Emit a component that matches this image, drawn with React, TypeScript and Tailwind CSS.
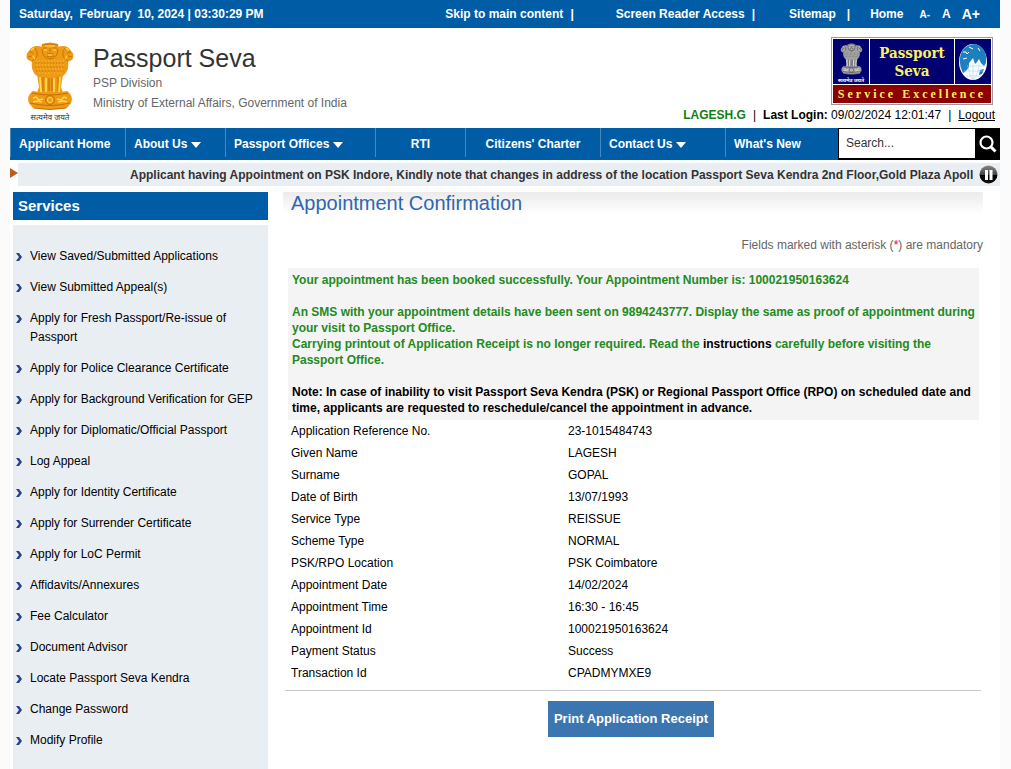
import type { ReactNode } from "react";

const navItems = [
  { label: "Applicant Home", width: "w-[115px]", align: "justify-start" },
  { label: "About Us", width: "w-[100px]", align: "justify-start", menu: true },
  { label: "Passport Offices", width: "w-[150px]", align: "justify-start", menu: true },
  { label: "RTI", width: "w-[90px]", align: "justify-center" },
  { label: "Citizens' Charter", width: "w-[135px]", align: "justify-center" },
  { label: "Contact Us", width: "w-[125px]", align: "justify-start", menu: true },
  { label: "What's New", width: "w-[113px]", align: "justify-start" },
];

const services = [
  "View Saved/Submitted Applications",
  "View Submitted Appeal(s)",
  "Apply for Fresh Passport/Re-issue of Passport",
  "Apply for Police Clearance Certificate",
  "Apply for Background Verification for GEP",
  "Apply for Diplomatic/Official Passport",
  "Log Appeal",
  "Apply for Identity Certificate",
  "Apply for Surrender Certificate",
  "Apply for LoC Permit",
  "Affidavits/Annexures",
  "Fee Calculator",
  "Document Advisor",
  "Locate Passport Seva Kendra",
  "Change Password",
  "Modify Profile",
];

const details = [
  ["Application Reference No.", "23-1015484743"],
  ["Given Name", "LAGESH"],
  ["Surname", "GOPAL"],
  ["Date of Birth", "13/07/1993"],
  ["Service Type", "REISSUE"],
  ["Scheme Type", "NORMAL"],
  ["PSK/RPO Location", "PSK Coimbatore"],
  ["Appointment Date", "14/02/2024"],
  ["Appointment Time", "16:30 - 16:45"],
  ["Appointment Id", "100021950163624"],
  ["Payment Status", "Success"],
  ["Transaction Id", "CPADMYMXE9"],
];

type EmblemProps = {
  className: string;
  base: string;
  light: string;
  dark: string;
};

function Emblem({ className, base, light, dark }: EmblemProps) {
  return (
    <svg viewBox="0 0 50 68" className={className} aria-hidden="true">
      {/* side lions */}
      <path d="M17 5 C12 3 6 4 4 9 C1 11 1 16 3 18 C5 19 6 19 7 20 C6 26 8 31 12 34 L19 34 Z" fill={base} />
      <path d="M33 5 C38 3 44 4 46 9 C49 11 49 16 47 18 C45 19 44 19 43 20 C44 26 42 31 38 34 L31 34 Z" fill={base} />
      <path d="M4 10 q3 -1 4 2 M3 15 l4 -1 M10 6 q3 3 2 8 M7 19 q4 -2 5 -5" fill="none" stroke={dark} strokeWidth="0.9" />
      <path d="M46 10 q-3 -1 -4 2 M47 15 l-4 -1 M40 6 q-3 3 -2 8 M43 19 q-4 -2 -5 -5" fill="none" stroke={dark} strokeWidth="0.9" />
      <path d="M6 8 l3 -2 M8 14 l2 3 M44 8 l-3 -2 M42 14 l-2 3" stroke={light} strokeWidth="1.2" />
      {/* front lion with mane */}
      <path d="M17 2 Q25 -1 33 2 L35 12 Q42 19 39 30 L32 36 L18 36 L11 30 Q8 19 15 12 Z" fill={base} />
      <path d="M17 3 Q25 1 33 3 M18 6 l4 0 M28 6 l4 0 M25 6 l0 4 M22 11 q3 2 6 0 M17 7 q0 9 8 10 q8 -1 8 -10 M21 14 q4 2 8 0" fill="none" stroke={dark} strokeWidth="0.9" />
      <path d="M19 8 l3 0 M28 8 l3 0 M23 13 l4 0 M20 4 l10 0" stroke={light} strokeWidth="1.1" />
      {/* mane curls */}
      <path d="M10 21 H40 M10 25 H40 M11 29 H39 M14 33 H36" stroke={dark} strokeWidth="1" strokeDasharray="1.5 1.5" opacity="0.7" />
      <path d="M11 19 H39 M11 23 H39 M12 27 H38 M14 31 H37" stroke={light} strokeWidth="0.9" strokeDasharray="1.2 1.8" opacity="0.7" />
      {/* legs */}
      <path d="M12 32 H38 L36 45 L38 51 H12 L14 45 Z" fill={base} />
      <path d="M18 35 V49 M24 36 V49 M27 36 V49 M33 35 V49" stroke={dark} strokeWidth="1.1" />
      <path d="M15 35 L16 50 M21 36 V50 M29 36 V50 M35 35 L34 50" stroke={light} strokeWidth="1.8" />
      {/* abacus */}
      <path d="M8 49 Q25 53 42 49 Q49 54 46 61 L42 66 Q25 69 8 66 L4 61 Q1 54 8 49 Z" fill={base} />
      <path d="M7 51 Q25 55 43 51 M5 61 Q25 66 45 61 M9 66 Q25 69 41 66" fill="none" stroke={dark} strokeWidth="1" />
      <circle cx="25" cy="58" r="4.5" fill={base} stroke={dark} strokeWidth="1" />
      <circle cx="25" cy="58" r="2.5" fill="none" stroke={light} strokeWidth="1" />
      <path d="M8 56 l3 -1 3 3 4 -1 M8 60 l4 -1 5 1 M42 56 l-3 -1 -3 3 -4 -1 M42 60 l-4 -1 -5 1" fill="none" stroke={light} strokeWidth="1.4" />
    </svg>
  );
}

function Globe() {
  return (
    <svg viewBox="0 0 30 38" className="h-[38px] w-[30px]" aria-hidden="true">
      <ellipse cx="15" cy="19" rx="14" ry="18" fill="#ffffff" />
      <path d="M4 8 Q9 1 17 1 Q26 3 28 13 L28 20 L26 23 L23 20 L21 16 L19 19 L17 21 L15 15 L11 20 L11 24 L8 28 L5 30 Q-1 19 4 8 Z" fill="#1c7fc0" />
      <path d="M5 9 l3 0 l1 2 l2 -2 M11 4 l4 2 M5 16 l4 -1 M20 5 l2 3" fill="none" stroke="#ffffff" strokeWidth="1" />
      <path d="M22 27 l4 -1 l-2 5 l-3 1 Z" fill="#1c7fc0" />
      <path d="M15 20 V37 M9 23 H28 M6 28 H26 M8 33 H23 M10 24 Q11 32 15 37 M21 21 Q21 31 15 37" fill="none" stroke="#a9d2ec" strokeWidth="0.6" />
    </svg>
  );
}

function PassportSevaLogo() {
  return (
    <div className="flex h-[68px] w-[162px] flex-col gap-px border border-[#98989f] bg-white p-px font-['Liberation_Serif',serif] font-bold text-[#fbf25c]">
      <div className="flex flex-1 gap-px">
        <div className="flex w-[36px] flex-col items-center justify-center bg-[#000070]">
          <Emblem className="h-[36px] w-[23px]" base="#a0a0a0" light="#e6e6e6" dark="#333333" />
          <span className="font-['Noto_Sans',sans-serif] text-[5px] leading-[6px] text-white">सत्यमेव जयते</span>
        </div>
        <div className="flex flex-1 flex-col items-center justify-center bg-[#000070] font-['DejaVu_Serif_Condensed','DejaVu_Serif',serif] text-[15px] leading-[18px]">
          <span>Passport</span>
          <span>Seva</span>
        </div>
        <div className="flex w-[36px] items-center justify-center bg-[#000070]">
          <Globe />
        </div>
      </div>
      <div className="flex h-[18px] items-center justify-center bg-[#8c0000] text-[12px] leading-[18px] tracking-[3px]">
        Service Excellence
      </div>
    </div>
  );
}

function TopLink({ children, className }: { children: ReactNode; className?: string }) {
  return (
    <a href="#" className={className}>
      {children}
    </a>
  );
}

function TopBar() {
  return (
    <div className="flex h-7 items-center bg-[#005da5] pr-5 pl-[9px] text-[12px] font-bold text-white">
      <span className="whitespace-pre">Saturday,  February  10, 2024 | 03:30:29 PM</span>
      <div className="ml-auto flex items-center">
        <TopLink>Skip to main content</TopLink>
        <span className="ml-[7px]">|</span>
        <TopLink className="ml-[42px]">Screen Reader Access</TopLink>
        <span className="ml-[7px]">|</span>
        <TopLink className="ml-[34px]">Sitemap</TopLink>
        <span className="ml-[11px]">|</span>
        <TopLink className="ml-5">Home</TopLink>
        <button type="button" className="ml-4 text-[10px]">A-</button>
        <button type="button" className="ml-3 text-[12px]">A</button>
        <button type="button" className="ml-[11px] text-[14px]">A+</button>
      </div>
    </div>
  );
}

function Header() {
  return (
    <header className="flex h-[100px] justify-between pl-[15px]">
      <div className="flex gap-[18px]">
        <div className="flex flex-col items-center pt-3.5">
          <Emblem className="h-[68px] w-[50px]" base="#ee9a14" light="#ffd94f" dark="#c76f08" />
          <span className="font-['Noto_Sans',sans-serif] text-[8px] leading-[14px] text-[#333333]">सत्यमेव जयते</span>
        </div>
        <div className="pt-[15px] text-[12px] leading-5 text-[#666666]">
          <h1 className="text-[25px] leading-[30px] text-[#333333]">Passport Seva</h1>
          <p>PSP Division</p>
          <p>Ministry of External Affairs, Government of India</p>
        </div>
      </div>
      <div className="flex flex-col items-end pt-[9px] pr-[5px]">
        <div className="pr-0.5">
          <PassportSevaLogo />
        </div>
        <div className="flex gap-[7px] text-[12px] leading-5 text-black">
          <span className="font-bold text-[#118011]">LAGESH.G</span>
          <span>|</span>
          <span>
            <b>Last Login:</b> 09/02/2024 12:01:47
          </span>
          <span>|</span>
          <a href="#" className="underline">Logout</a>
        </div>
      </div>
    </header>
  );
}

function NavBar() {
  return (
    <nav className="flex h-8 bg-[#005da5] text-[12px] font-bold text-white">
      {navItems.map((item) => (
        <a
          key={item.label}
          href="#"
          className={`flex h-[29px] items-center border-l border-[#4687bd] px-2 pt-[3px] whitespace-nowrap ${item.width} ${item.align}`}
        >
          {item.label}
          {item.menu && (
            <svg viewBox="0 0 10 6" className="mt-0.5 ml-1 h-1.5 w-2.5" aria-hidden="true">
              <path d="M0 0 H10 L5 6 Z" fill="#ffffff" />
            </svg>
          )}
        </a>
      ))}
      <form className="flex flex-1 bg-black" onSubmit={(e) => e.preventDefault()}>
        <input
          type="text"
          aria-label="Search"
          placeholder="Search..."
          className="h-[31px] w-full min-w-0 flex-1 border border-black bg-white px-[7px] pb-0.5 text-[12px] font-normal text-black placeholder:text-[#333333]"
        />
        <button type="submit" aria-label="Search" className="flex w-6 items-center justify-center">
          <svg viewBox="0 0 18 18" className="h-[18px] w-[18px]" fill="none" stroke="#ffffff" aria-hidden="true">
            <circle cx="7.5" cy="7.5" r="6" strokeWidth="2.2" />
            <path d="M12 12 L16.5 16.5" strokeWidth="3" />
          </svg>
        </button>
      </form>
    </nav>
  );
}

function Ticker() {
  return (
    <div className="mt-[3px] flex h-[23px] items-center">
      <svg viewBox="0 0 8 10" className="mb-1 h-2.5 w-2 shrink-0" aria-hidden="true">
        <path d="M0 0 L8 5 L0 10 Z" fill="#bf5b21" />
      </svg>
      <div className="flex h-full min-w-0 flex-1 items-center bg-[#e9eef2] pr-0.5 pl-28 text-[12px] font-bold text-[#333333]">
        <p className="flex-1 overflow-hidden whitespace-nowrap">
          Applicant having Appointment on PSK Indore, Kindly note that changes in address of the location Passport Seva Kendra 2nd Floor,Gold Plaza Apoll
        </p>
        <button type="button" aria-label="Pause" className="ml-1.5">
          <svg viewBox="0 0 19 19" className="h-[19px] w-[19px]" aria-hidden="true">
            <defs>
              <linearGradient id="pause-shade" x1="0" y1="0" x2="0" y2="1">
                <stop offset="0" stopColor="#888888" />
                <stop offset="0.5" stopColor="#444444" />
                <stop offset="0.55" stopColor="#000000" />
                <stop offset="1" stopColor="#111111" />
              </linearGradient>
            </defs>
            <circle cx="9.5" cy="9.5" r="9" fill="url(#pause-shade)" />
            <path d="M6 5 h3 v10 h-3 Z M10.5 5 h3 v10 h-3 Z" fill="#ffffff" />
          </svg>
        </button>
      </div>
    </div>
  );
}

function Sidebar() {
  return (
    <aside className="flex w-[255px] shrink-0 flex-col gap-[5px]">
      <h2 className="bg-[#005da5] pl-[5px] text-[15px] leading-7 font-bold text-white">Services</h2>
      <ul className="flex-1 bg-[#e9eef2] pt-4 pb-3 text-[12px] leading-[19px] text-black">
        {services.map((service) => (
          <li key={service} className="flex gap-2 py-1.5 pr-2 pl-[3px]">
            <svg viewBox="0 0 6 8" className="mt-[6px] h-2 w-1.5 shrink-0" aria-hidden="true">
              <path d="M0 0 H3 L6 4 L3 8 H0 L3 4 Z" fill="#24418c" />
            </svg>
            <a href="#">{service}</a>
          </li>
        ))}
      </ul>
    </aside>
  );
}

function Confirmation() {
  return (
    <main className="min-w-0 flex-1">
      <h2 className="bg-linear-to-b from-[#ebebeb] to-white pl-2 text-[20px] leading-[22px] text-[#2f66b1]">
        Appointment Confirmation
      </h2>
      <p className="mt-[21px] text-right text-[12px] leading-5 text-[#666666]">
        Fields marked with asterisk (<span className="text-red-600">*</span>) are mandatory
      </p>
      <div className="mt-[13px] mr-1 ml-[5px] bg-[#f4f4f4] p-1 text-[12px] leading-4 font-bold text-[#228b22]">
        <p>Your appointment has been booked successfully. Your Appointment Number is: 100021950163624</p>
        <p className="mt-4">
          An SMS with your appointment details have been sent on 9894243777. Display the same as proof of appointment during your visit to Passport Office.
        </p>
        <p>
          Carrying printout of Application Receipt is no longer required. Read the{" "}
          <a href="#" className="text-black">instructions</a> carefully before visiting the Passport Office.
        </p>
        <p className="mt-4 text-black">
          Note: In case of inability to visit Passport Seva Kendra (PSK) or Regional Passport Office (RPO) on scheduled date and time, applicants are requested to reschedule/cancel the appointment in advance.
        </p>
      </div>
      <table className="ml-2 text-left text-[12px] leading-[22px] text-black">
        <tbody>
          {details.map(([label, value]) => (
            <tr key={label}>
              <th scope="row" className="w-[277px] p-0 font-normal">{label}</th>
              <td className="p-0">{value}</td>
            </tr>
          ))}
        </tbody>
      </table>
      <div className="mt-1.5 mr-0.5 ml-0.5 flex justify-center border-t border-[#c8c8c8] pt-2.5 pr-1">
        <button type="button" className="h-9 bg-[#3c76b1] px-1.5 text-[13px] font-bold text-white">
          Print Application Receipt
        </button>
      </div>
    </main>
  );
}

export default function App() {
  return (
    <div className="min-h-screen bg-[#fbfbfb] pr-[11px] pl-2.5 font-['Liberation_Sans',Arial,sans-serif]">
      <div className="flex min-h-screen flex-col bg-white">
        <TopBar />
        <Header />
        <NavBar />
        <Ticker />
        <div className="mt-1.5 flex flex-1 gap-[15px] pr-[17px] pl-[3px]">
          <Sidebar />
          <Confirmation />
        </div>
      </div>
    </div>
  );
}
